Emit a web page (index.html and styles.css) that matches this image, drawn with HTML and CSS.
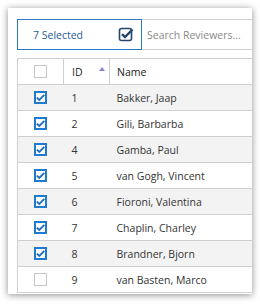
FILE: index.html
```html
<!DOCTYPE html>
<html>
<head>
    <title>Reviewers</title>
    <link rel="stylesheet" href="styles.css">
</head>
<body>
    <div class="card">
        <div class="toolbar">
            <div class="selected">
                <span class="selected-text">7 Selected</span>
                <svg class="selected-icon" width="16" height="16" viewBox="0 0 16 16">
                    <rect x="1.5" y="2.5" width="12" height="12" rx="2" fill="none" stroke="#24456e" stroke-width="1.6"/>
                    <path d="M4 8.2 L7 11 L14.5 3.5" fill="none" stroke="#24456e" stroke-width="2.4" stroke-linejoin="miter"/>
                </svg>
            </div>
            <div class="search">Search Reviewers...</div>
        </div>
        <table class="grid">
            <thead>
                <tr>
                    <th class="col-check"><span class="box"></span></th>
                    <th class="col-id">ID<span class="sort"></span></th>
                    <th class="col-name">Name</th>
                </tr>
            </thead>
            <tbody>
                <tr class="odd"><td class="col-check"><span class="box checked"></span></td><td class="col-id">1</td><td class="col-name">Bakker, Jaap</td></tr>
                <tr><td class="col-check"><span class="box checked"></span></td><td class="col-id">2</td><td class="col-name">Gili, Barbarba</td></tr>
                <tr class="odd"><td class="col-check"><span class="box checked"></span></td><td class="col-id">4</td><td class="col-name">Gamba, Paul</td></tr>
                <tr><td class="col-check"><span class="box checked"></span></td><td class="col-id">5</td><td class="col-name">van Gogh, Vincent</td></tr>
                <tr class="odd"><td class="col-check"><span class="box checked"></span></td><td class="col-id">6</td><td class="col-name">Fioroni, Valentina</td></tr>
                <tr><td class="col-check"><span class="box checked"></span></td><td class="col-id">7</td><td class="col-name">Chaplin, Charley</td></tr>
                <tr class="odd"><td class="col-check"><span class="box checked"></span></td><td class="col-id">8</td><td class="col-name">Brandner, Bjorn</td></tr>
                <tr><td class="col-check"><span class="box"></span></td><td class="col-id">9</td><td class="col-name">van Basten, Marco</td></tr>
            </tbody>
        </table>
    </div>
</body>
</html>
```

FILE: styles.css
```css
body {
    margin: 0;
    background: #ffffff;
    font-family: "Open Sans", Arial, sans-serif;
    font-size: 10.5px;
    color: #333;
}

.card {
    margin: 8px;
    width: 244px;
    height: 286px;
    background: #fff;
    box-shadow: 0 1px 7px rgba(0,0,0,0.45);
    overflow: hidden;
    padding: 11px 0 0 9px;
    box-sizing: border-box;
}

.toolbar {
    display: flex;
    width: 300px;
    height: 31px;
}

.selected {
    width: 125px;
    box-sizing: border-box;
    border: 1px solid #2a78c6;
    display: flex;
    align-items: center;
    justify-content: space-between;
    padding: 0 7px 0 15px;
}

.selected-text {
    color: #1f5a9a;
}

.selected-icon {
    display: block;
    margin-top: -1px;
}

.search {
    flex: 1;
    border-top: 1px solid #cfcfcf;
    border-bottom: 1px solid #cfcfcf;
    display: flex;
    align-items: center;
    padding-left: 5px;
    color: #8a8a8a;
}

.grid {
    margin-top: 8px;
    border-collapse: collapse;
    width: 320px;
    table-layout: fixed;
    border-left: 1px solid #cfcfcf;
}

.grid th,
.grid td {
    height: 25px;
    padding: 0;
    border-top: 1px solid #cfcfcf;
    border-bottom: 1px solid #cfcfcf;
    text-align: left;
    font-weight: normal;
    white-space: nowrap;
}

.grid th {
    color: #222;
    border-right: 1px solid #cfcfcf;
}

.grid tr.odd td {
    background: #f3f3f3;
}

.col-check {
    width: 45px;
    text-align: center !important;
}

.col-id {
    width: 37px;
    padding-left: 8px !important;
    position: relative;
}

.col-name {
    padding-left: 7px !important;
}

.box {
    display: inline-block;
    width: 13px;
    height: 13px;
    box-sizing: border-box;
    border: 1px solid #c8c8c8;
    background: #fff;
    vertical-align: middle;
    margin-top: -2px;
}

.box.checked {
    border: 2px solid #1f7ad0;
    background: #fff url("data:image/svg+xml,%3Csvg xmlns='http://www.w3.org/2000/svg' width='9' height='9' viewBox='0 0 9 9'%3E%3Cpath d='M0.8 4.6 L3.3 7 L8.4 1.8' fill='none' stroke='%231f6fc0' stroke-width='1.9'/%3E%3C/svg%3E") center / 9px 9px no-repeat;
}

.sort {
    position: absolute;
    right: 4px;
    top: 8px;
    width: 0;
    height: 0;
    border-left: 3px solid transparent;
    border-right: 3px solid transparent;
    border-bottom: 4px solid #8686dc;
}
```
